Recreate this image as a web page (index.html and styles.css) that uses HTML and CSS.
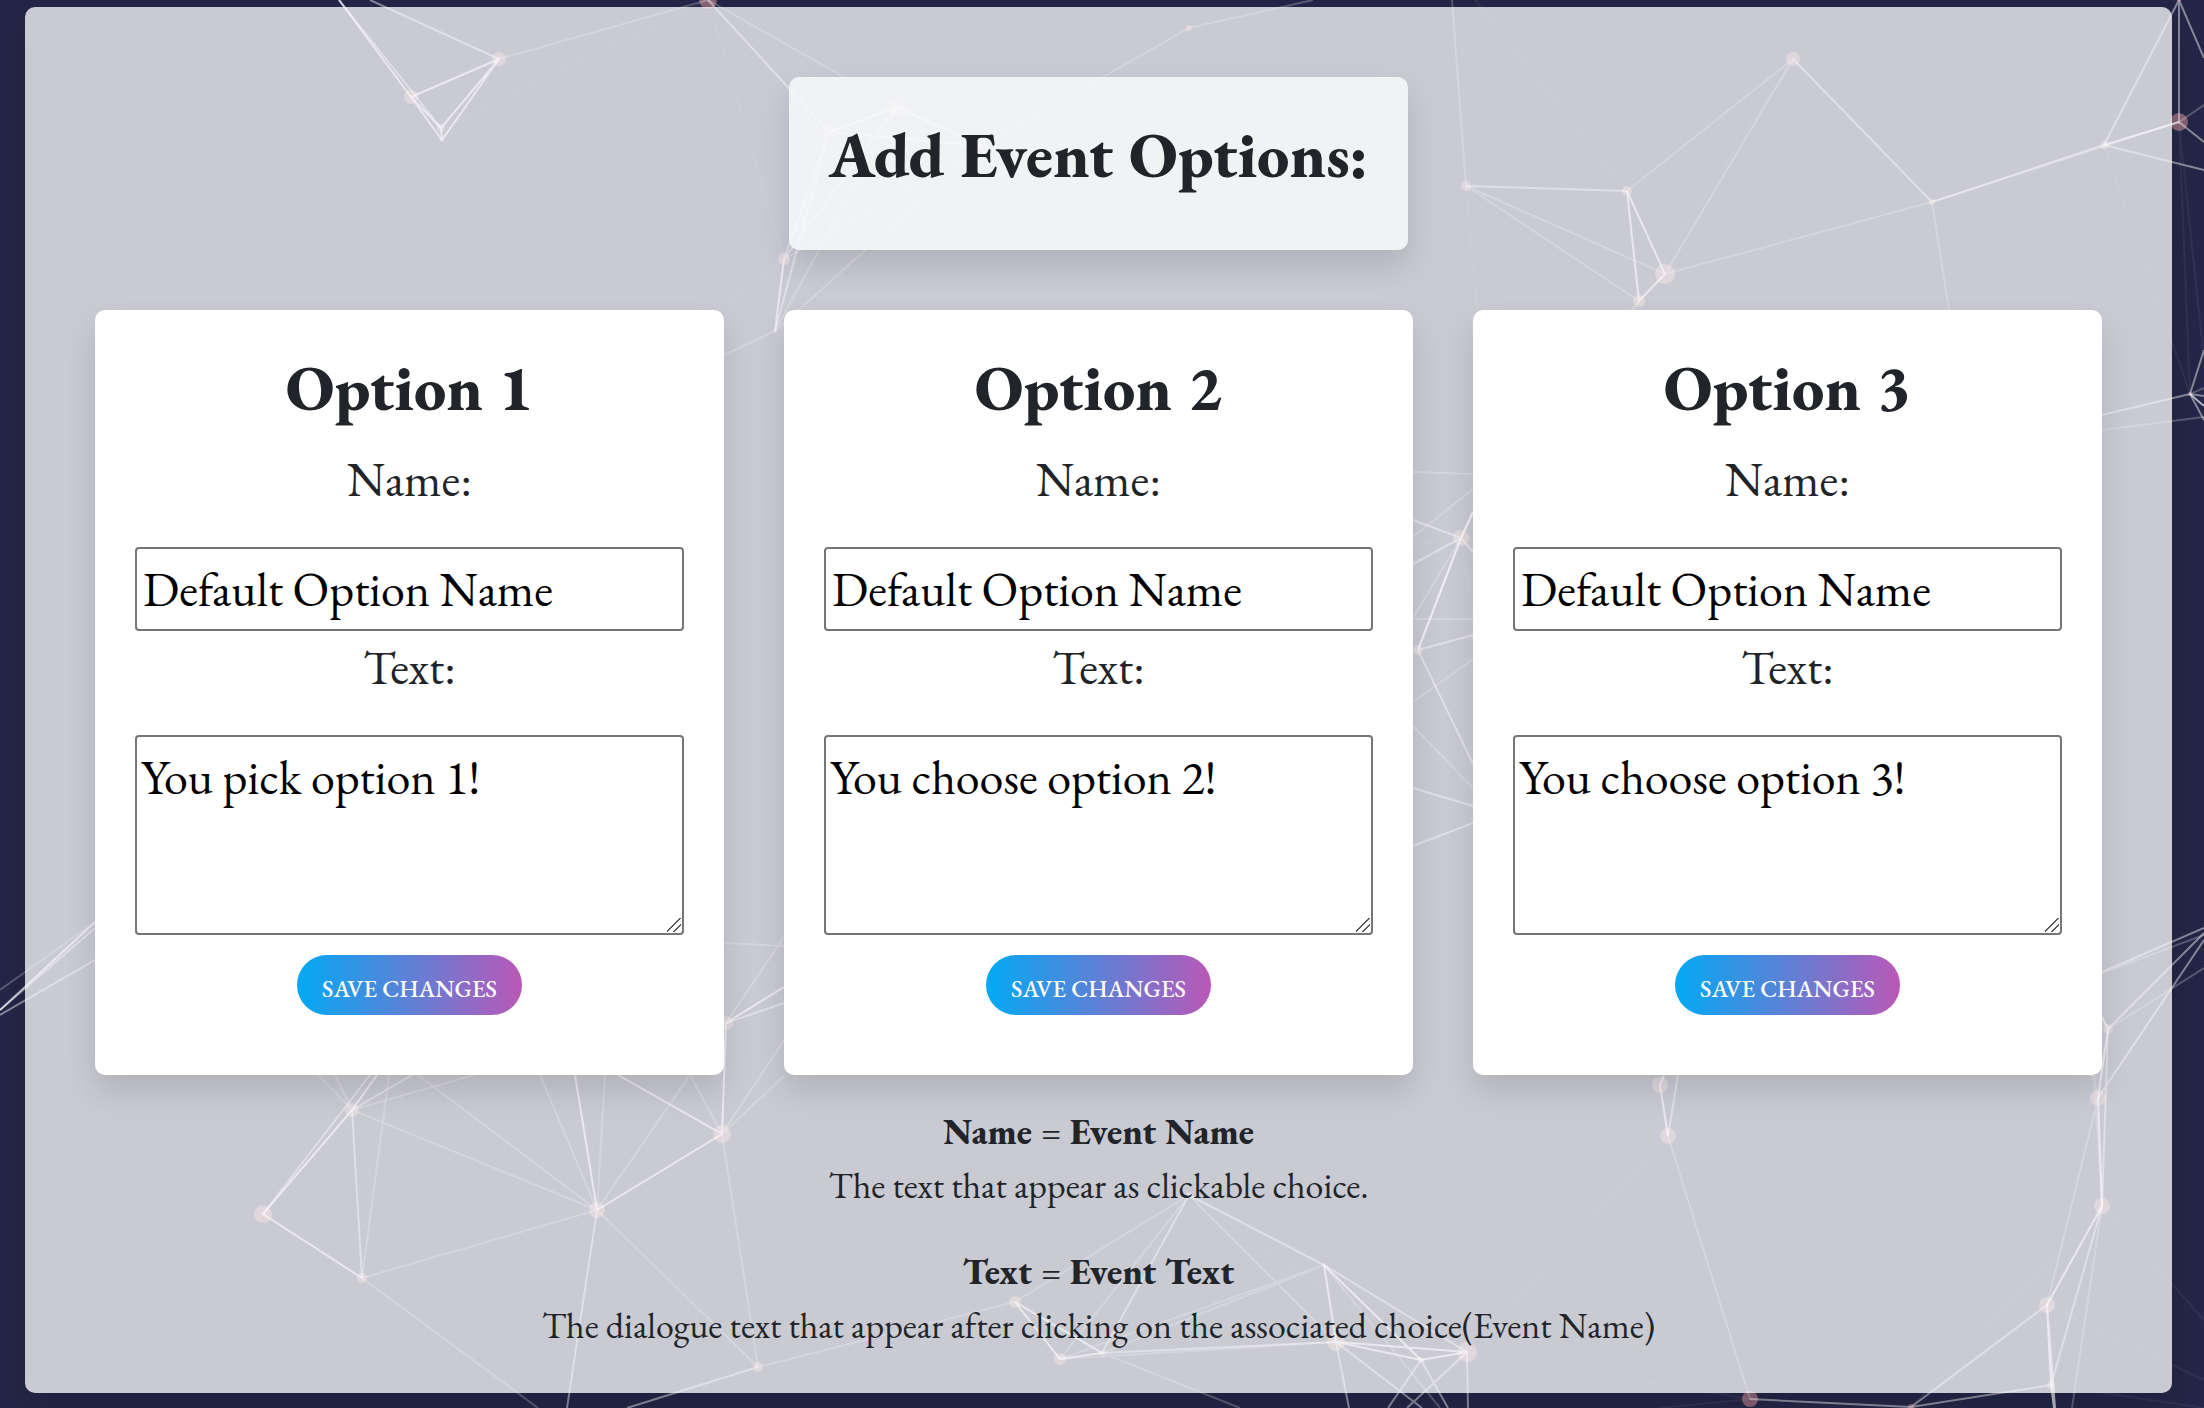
FILE: index.html
```html
<!DOCTYPE html>
<html lang="en">
<head>
<meta charset="utf-8">
<meta name="viewport" content="width=device-width, initial-scale=1">
<title>Add Event Options</title>
<link rel="stylesheet" href="styles.css">
</head>
<body>
<svg class="network" viewBox="0 0 2204 1408" preserveAspectRatio="xMidYMid slice" aria-hidden="true">
  <g class="dots">
    <circle cx="499" cy="59" r="7"/><circle cx="411" cy="97" r="7"/><circle cx="441" cy="128" r="4"/><circle cx="442" cy="140" r="2"/>
    <circle cx="708" cy="0" r="9"/><circle cx="829" cy="132" r="7"/><circle cx="897" cy="107" r="10"/><circle cx="982" cy="146" r="4"/>
    <circle cx="784" cy="259" r="6"/><circle cx="775" cy="331" r="2"/><circle cx="1189" cy="28" r="3"/>
    <circle cx="1466" cy="186" r="5"/><circle cx="1627" cy="191" r="5"/><circle cx="1793" cy="59" r="7"/><circle cx="1665" cy="274" r="10"/>
    <circle cx="1639" cy="301" r="6"/><circle cx="1932" cy="202" r="3"/><circle cx="2104" cy="145" r="4"/><circle cx="2179" cy="122" r="9"/>
    <circle cx="2179" cy="0" r="2"/><circle cx="2190" cy="394" r="2"/><circle cx="1461" cy="538" r="8"/><circle cx="1418" cy="650" r="5"/>
    <circle cx="352" cy="1110" r="7"/><circle cx="263" cy="1214" r="9"/><circle cx="362" cy="1278" r="5"/><circle cx="597" cy="1210" r="8"/>
    <circle cx="722" cy="1134" r="9"/><circle cx="726" cy="1023" r="7"/><circle cx="758" cy="1367" r="5"/>
    <circle cx="1189" cy="1195" r="3"/><circle cx="1015" cy="1302" r="6"/><circle cx="1060" cy="1359" r="6"/><circle cx="1102" cy="1353" r="3"/>
    <circle cx="1324" cy="1265" r="2"/><circle cx="1336" cy="1342" r="9"/><circle cx="1421" cy="1360" r="3"/><circle cx="1467" cy="1352" r="10"/>
    <circle cx="1660" cy="1085" r="8"/><circle cx="1668" cy="1136" r="8"/><circle cx="1750" cy="1399" r="8"/><circle cx="1911" cy="1407" r="3"/>
    <circle cx="2047" cy="1305" r="8"/><circle cx="2051" cy="1385" r="4"/><circle cx="2102" cy="1206" r="8"/><circle cx="2098" cy="1098" r="8"/><circle cx="2108" cy="1029" r="5"/>
  </g>
  <path class="link strong" d="M339 0L411 97M411 97L499 59L441 128M499 59L442 140L411 97L441 128L442 140M829 132L897 107L982 146M784 259L775 331M1627 191L1665 274L1639 301L1627 191M2104 145L2179 122M1461 538L1418 650M1473 512L1461 538M352 1110L263 1214L362 1278M352 1110L377 1075M597 1210L722 1134L618 1075M722 1134L726 1023L784 987M597 1210L575 1075M1015 1302L1060 1359L1102 1353L1015 1302M1324 1265L1336 1342L1421 1360L1467 1352L1336 1342M1324 1265L1421 1360M1664 1075L1660 1085L1668 1136M2102 1206L2098 1098M2102 1206L2047 1305L2051 1385L2054 1408M2047 1305L2055 1408M2102 1017L2108 1029L2098 1098M2190 394L2204 406M0 1010L95 922"/>
  <path class="link medium" d="M339 0L441 128M370 0L499 59M708 0L829 132L982 146M829 132L784 259M897 107L784 259M829 132L775 331M1466 186L1627 191M1932 202L2104 145L2179 0V122L2204 142M2104 145L2204 170M1932 202L1793 59M2190 394L2102 415M2179 0L2204 58M2190 394L2204 350M2190 394L2204 396M2190 394L2204 420M1413 520L1461 538L1413 564M1461 538L1473 552M1418 650L1461 538L1473 512M1418 650L1473 635M1418 650L1473 764M1413 788L1473 806M1413 846L1473 823M352 1110L362 1278M352 1110L412 1075M263 1214L370 1075M726 1023L784 1003M758 1367L627 1408M597 1210L567 1408M0 1015L95 960M0 1010L95 928M1189 1195L1324 1265L1467 1352M1189 1195L1102 1353M1336 1342L1349 1408M1336 1342L1422 1408M1388 1408L1421 1360L1448 1408M1407 1408L1467 1352L1468 1408M1678 1075L1668 1136M1750 1399L1911 1407L2047 1305M1911 1407L2051 1385L2102 1206L2108 1029L2204 933M2102 972L2204 928M2204 940L2098 1098M1102 1353L1336 1342"/>
  <path class="link weak" d="M499 59L708 0L897 107M1452 0L1466 186L1665 274L1793 59L1627 191M1466 186L1639 301M1665 274L1932 202L1949 310M1189 28L982 146M1189 28L1313 0M784 259L982 146M897 107L775 331L982 146M775 331L724 355M1639 301L1630 312M1932 202L2179 122L2204 105M2102 430L2204 417M2190 394L2204 388M1413 472L1473 474M1413 537L1473 489M1413 619H1473M1413 702L1473 659M1413 726L1473 788M1461 538L1413 618M474 1075L352 1110L335 1075M318 1075L352 1110L597 1210L418 1075M362 1278L389 1075M362 1278L597 1210L540 1075M597 1210L690 1075L722 1134L784 1040M784 1076L722 1134L758 1367L597 1210M597 1210L605 1075M362 1278L538 1408M725 943L784 946M726 1023L784 937M0 990L95 922M758 1367L1015 1302L1189 1195L1060 1359L1324 1265L1102 1353L1240 1408M1189 1195L1336 1342L1060 1359M1324 1265L1440 1408M1668 1136L1750 1399M2094 1075L2102 1206L2072 1408M2093 1075L2098 1098L2047 1305M2108 1029L2204 968M2102 973L2204 935"/>
  <path class="link faint" d="M708 0L441 128M708 0L784 259L724 305M1475 0L1627 191M1793 59L1639 301M1466 186L1477 310M2104 145L2190 394L2179 122L2204 360M1413 545L1461 538L1473 620M1418 650L1473 661M1189 1195L1421 1360M1507 1310L1668 1136M1467 1352L1750 1399L1660 1408M1911 1407L2102 1206L2204 1320M2047 1305L2204 1380M2051 1385L2204 1408M726 949L784 955"/>
</svg>

<main class="panel">
  <h1 class="title">Add Event Options:</h1>

  <div class="options">
    <form class="card">
      <h2 class="card-title">Option 1</h2>
      <label class="label" for="name1">Name:</label>
      <input class="field name" id="name1" type="text" value="Default Option Name">
      <label class="label" for="text1">Text:</label>
      <textarea class="field text" id="text1">You pick option 1!</textarea>
      <button class="save" type="button">SAVE CHANGES</button>
    </form>
    <form class="card">
      <h2 class="card-title">Option 2</h2>
      <label class="label" for="name2">Name:</label>
      <input class="field name" id="name2" type="text" value="Default Option Name">
      <label class="label" for="text2">Text:</label>
      <textarea class="field text" id="text2">You choose option 2!</textarea>
      <button class="save" type="button">SAVE CHANGES</button>
    </form>
    <form class="card">
      <h2 class="card-title">Option 3</h2>
      <label class="label" for="name3">Name:</label>
      <input class="field name" id="name3" type="text" value="Default Option Name">
      <label class="label" for="text3">Text:</label>
      <textarea class="field text" id="text3">You choose option 3!</textarea>
      <button class="save" type="button">SAVE CHANGES</button>
    </form>
  </div>

  <div class="notes">
    <div class="note">
      <p><strong>Name </strong>=<strong> Event Name</strong></p>
      <p>The text that appear as clickable choice.</p>
    </div>
    <div class="note">
      <p><strong>Text </strong>=<strong> Event Text</strong></p>
      <p>The dialogue text that appear after clicking on the associated choice(Event Name)</p>
    </div>
  </div>
</main>
</body>
</html>
```

FILE: styles.css
```css
* {
  box-sizing: border-box;
}

body {
  position: relative;
  margin: 0;
  min-height: 100vh;
  padding: 7px 32px 15px 25px;
  background: #232646;
  color: #212529;
  font-family: "EB Garamond", "Liberation Serif", serif;
}

/* Particle network behind the panel */
.network {
  position: absolute;
  inset: 0;
  width: 100%;
  height: 100%;
}

.dots {
  fill: #e89aa0;
  opacity: 0.5;
}

.link {
  fill: none;
  stroke: #fff;
  stroke-width: 2;
}

.strong { opacity: 0.65; }
.medium { opacity: 0.45; }
.weak { opacity: 0.24; }
.faint { opacity: 0.06; }

.panel {
  position: relative;
  display: flex;
  flex-direction: column;
  align-items: center;
  padding: 70px 70px 40px;
  border-radius: 10px;
  background: rgba(248, 249, 250, 0.78);
  box-shadow: 0 16px 32px rgba(0, 0, 0, 0.12);
}

.title {
  margin: 0 0 60px;
  padding: 40px 40px 57px;
  border-radius: 10px;
  background: rgba(248, 249, 250, 0.85);
  box-shadow: 0 16px 32px rgba(0, 0, 0, 0.12);
  font-size: 64px;
  font-weight: 800;
  line-height: 76px;
}

.options {
  display: grid;
  grid-template-columns: repeat(3, minmax(0, 1fr));
  gap: 60px;
  width: 100%;
}

.card {
  display: flex;
  flex-direction: column;
  align-items: center;
  padding: 40px 40px 60px;
  border-radius: 10px;
  background: #fff;
  box-shadow: 0 16px 32px rgba(0, 0, 0, 0.12);
}

.card-title {
  margin: 0 0 18px;
  font-size: 64px;
  font-weight: 800;
  line-height: 75px;
}

.label {
  margin-bottom: 32px;
  font-size: 48px;
  line-height: 72px;
}

.field {
  width: 100%;
  margin: 0;
  border: 2px solid #767676;
  border-radius: 4px;
  background: #fff;
  color: #000;
  font-family: inherit;
  font-size: 48px;
}

.name {
  height: 84px;
  padding: 2px 6px;
}

.text {
  height: 200px;
  padding: 4px;
  line-height: 72px;
  resize: vertical;
}

.text::-webkit-resizer {
  background: linear-gradient(135deg, transparent 46%, #555 46%, #555 52%, transparent 52%, transparent 70%, #555 70%, #555 76%, transparent 76%) 0 0 / 14px 14px no-repeat;
}

.save {
  height: 60px;
  margin-top: 20px;
  padding: 6px 25px 0;
  border: 0;
  border-radius: 30px;
  background: linear-gradient(to right, #03a9f4, #ba58b7);
  color: #fff;
  font-family: inherit;
  font-size: 24px;
  font-weight: 500;
}

.notes {
  display: grid;
  gap: 32px;
  margin-top: 30px;
  text-align: center;
  font-size: 36px;
  line-height: 54px;
}

.note p {
  margin: 0;
}

.note strong {
  font-weight: 800;
}
```
